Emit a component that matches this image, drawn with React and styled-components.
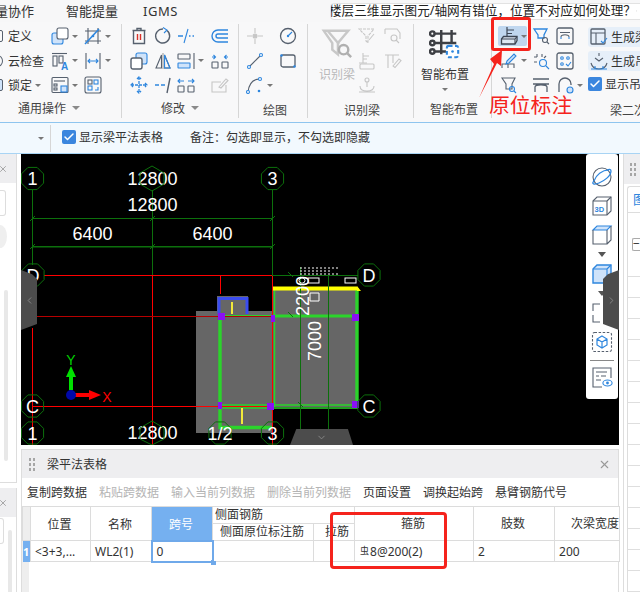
import React from "react";
import styled, { createGlobalStyle } from "styled-components";
import { Check, ChevronLeft, ChevronRight, ChevronDown, X, Search } from "lucide-react";

const D = "#56606e";
const B = "#2e86de";
const L = "#cfe3fa";
const G = "#c6c6c6";
const CAD_GREEN = "#0c700c";
const BRIGHT = "#2bd42b";
const FONT = `"Noto Sans", "Noto Sans CJK SC", sans-serif`;

const icons = {
  copy: <><rect x="1" y="6" width="11" height="11" rx="2" fill={L} stroke={B} /><rect x="6" y="1" width="11" height="11" rx="2" fill="#fff" /></>,
  trim: <><path d="M4 1v16M14 1v16M1 4h16M1 14h16" /><path d="M1 17L15 2" stroke={B} strokeWidth="1.6" /><circle cx="9" cy="9" r="1.3" fill={B} stroke="none" /></>,
  dimA: <><path d="M1 1.5h15" /><rect x="2" y="4" width="4" height="10" /><rect x="8" y="4" width="4" height="7" /><text x="10" y="17.5" fontSize="10" fontWeight="700" fill={B} stroke="none">A</text></>,
  width: <><path d="M2 1v16M16 1v16" /><path d="M4 9h10M6 7L4 9l2 2M12 7l2 2-2 2" stroke={B} /></>,
  list: <><rect x="1" y="1.5" width="16" height="15" rx="1" /><path d="M3 5h11" /><rect x="3" y="8" width="3" height="2" /><rect x="3" y="12" width="3" height="2" /><rect x="10" y="10" width="6" height="6" fill={L} stroke={B} /></>,
  swap: <><rect x="1" y="1" width="16" height="16" rx="2" /><rect x="4" y="4" width="4" height="4" /><rect x="10" y="4" width="4" height="4" stroke={B} /><rect x="4" y="10" width="4" height="4" stroke={B} /><path d="M11 14h3v-3" stroke={B} /></>,
  trash: <><path d="M2.5 3.5h13M7 3.5V1.5h4v2M3.5 3.5v13h11v-13" strokeWidth="1.4" /><path d="M7.5 7v6M10.5 7v6" stroke="#d8322a" strokeWidth="1.4" /></>,
  rotate: <><path d="M13 3.5A7 7 0 1 1 9 2" strokeWidth="1.4" /><path d="M9 .5l4 2.5-3 3" stroke={B} /></>,
  cross: <><path d="M1 9h5M12 9h1.5M15.5 9H17" stroke={B} strokeWidth="1.4" /><path d="M7 16l4-14" stroke={B} /></>,
  offset: <><path d="M17 3H7a6 6 0 0 0 0 12h10" stroke={B} strokeWidth="1.4" /><path d="M17 7H7a2 2 0 0 0 0 4h10" stroke={B} strokeWidth="1.4" /></>,
  copy2: <><rect x="6" y="1" width="11" height="11" rx="2" fill={L} stroke={B} /><rect x="1" y="6" width="11" height="11" rx="2" fill="#fff" strokeWidth="1.4" /></>,
  mirror: <><path d="M7.5 3L2 16h5.5zM10.5 3L16 16h-5.5z" /><path d="M9 1v16" stroke={G} strokeWidth="2" /><path d="M10.5 3L16 16h-5.5z" stroke={B} /></>,
  align: <><rect x="1" y="2" width="12" height="5" rx=".5" /><rect x="1" y="11" width="12" height="5" rx=".5" fill={L} stroke={B} /><path d="M17 1v16" /></>,
  split: <><rect x="1" y="10" width="6" height="6" rx=".5" /><rect x="11" y="10" width="6" height="6" rx=".5" /><path d="M1 5h3M2.5 3L4.5 5l-2 2M14 5h3M15.5 3l-2 2 2 2" stroke={B} /></>,
  move: <path d="M9 1v16M1 9h16M7 3l2-2 2 2M7 15l2 2 2-2M3 7L1 9l2 2M15 7l2 2-2 2" stroke={B} strokeWidth="1.3" strokeDasharray="3 1" />,
  extend: <><path d="M1 9h4M7 9h4" stroke={B} strokeWidth="1.4" /><path d="M13 17l3-15" strokeWidth="1.4" /></>,
  divide: <><rect x="1" y="10" width="6" height="6" rx=".5" /><rect x="11" y="10" width="6" height="6" rx=".5" /><path d="M1 5h6M3 3L1 5l2 2M11 5h6M15 3l2 2-2 2" stroke={B} /></>,
  penBox: <g stroke={G}><path d="M15 9v7H1V6h9" /><path d="M8 11l7-8 2 1.5-7 7.5z" /></g>,
  point: <g stroke={G}><path d="M9 1v5M9 12v5M1 9h5M12 9h5" /><circle cx="9" cy="9" r="2" fill={G} /></g>,
  gauge: <><circle cx="9" cy="9" r="7.5" strokeWidth="1.3" /><path d="M9 9l4-4" stroke={B} /><circle cx="9" cy="9" r="1.2" fill={B} stroke="none" /></>,
  line: <><path d="M3 15L15 3" /><circle cx="3" cy="15" r="1.5" fill="#fff" stroke={B} /><circle cx="15" cy="3" r="1.5" fill="#fff" stroke={B} /></>,
  rect: <><rect x="2" y="3" width="14" height="12" rx="2" strokeWidth="1.3" /><circle cx="2.5" cy="3.5" r="1.3" fill={B} stroke="none" /><circle cx="15.5" cy="14.5" r="1.3" fill={B} stroke="none" /></>,
  arc: <><path d="M2 16C3 7 8 3 14 3" /><circle cx="2" cy="16" r="1.5" fill="#fff" stroke={B} /><circle cx="14" cy="3" r="1.5" fill="#fff" stroke={B} /><circle cx="13" cy="15" r="1.3" fill={B} stroke="none" /></>,
  pickA: <g stroke={G}><path d="M1 2h15l-6 7v7l-2-2V9z" strokeDasharray="3 1" /><path d="M11 13l5-6" /></g>,
  pickB: <g stroke={G}><path d="M1 2h12l3 4v6M1 2v5" /><circle cx="10" cy="11" r="3" /><path d="M12 13l3 3" /></g>,
  pickC: <g stroke={G}><path d="M1 11h8M5 1v10M5 4h6M5 7h4" /><rect x="2" y="12" width="14" height="5" rx="1" /></g>,
  pickD: <g stroke={G}><path d="M1 3h14M4 3v13M9 3v8" /><path d="M9 14l6-7 2 1.5-6 7z" /></g>,
  pickE: <g stroke={G}><circle cx="9" cy="4" r="2" /><path d="M9 6v5M2 10c0 4 3 5 7 5s7-1 7-5M1 16h16" /></g>,
  place: <><path d="M7 0v10M7 3h7M7 6.5h5" stroke="#3c4654" strokeWidth="1.2" /><path d="M1.5 17V12l2-2.5H17v4l-2 3.5z" fill="#dfe9f5" stroke="#3c4654" strokeWidth="1.3" /><path d="M1.5 12H15v5M15 12l2-2.5" stroke="#3c4654" /></>,
  funnel: <><path d="M2 2h13l-3 6v3H6V8z" stroke={B} strokeWidth="1.3" /><circle cx="13" cy="13" r="2.5" /><path d="M15 15l2 2" /></>,
  arch: <><rect x="1" y="1" width="16" height="16" rx="2" strokeWidth="1.3" /><path d="M4 5.5h10M5 10c0-3 8-3 8 0" stroke={D} /><path d="M5 10v2M13 10v2" stroke={B} /></>,
  pen: <><path d="M2 16v-4h12v4M8 12v4" /><path d="M7 9l7-7 2 2-7 7-3 1z" stroke={B} fill={L} /></>,
  scan: <><path d="M5 2v3M2 5h3M10 2v3M2 10h3M14 4l-2 2" /><circle cx="11" cy="11" r="3.5" stroke={B} /><path d="M14 14l3 3" stroke={B} /></>,
  dots: <><rect x="1" y="1" width="16" height="16" rx="2" strokeWidth="1.3" /><circle cx="6" cy="6" r="1.3" stroke={B} /><circle cx="12" cy="6" r="1.3" stroke={B} /><circle cx="6" cy="12" r="1.3" stroke={B} /><path d="M10 12l2 2 3-4" stroke={B} /></>,
  tray: <><path d="M2 2h13l-3 6v5H6V8z" /><circle cx="12" cy="13" r="2.5" stroke={B} /><path d="M14 15l2 2" stroke={B} /></>,
  beam: <path d="M1 8h16M3 16v-5c0-3 12-3 12 0v5M1 3h16" strokeWidth="1.3" />,
  hook: <><path d="M3 16V8a6 6 0 0 1 12 0v1" strokeWidth="1.3" /><circle cx="14" cy="14" r="3" stroke={B} fill={L} /></>,
  gen1: <><rect x="1" y="1" width="14" height="15" rx="1" strokeWidth="1.3" /><path d="M1 5h14M6 5v11" /><path d="M11 13l2 2 4-5" stroke={B} /></>,
  gen2: <><path d="M9 1v3M5 6l4 3 4-3M1 11c1 4 4 6 8 6s7-2 8-6" /><path d="M1 17h16M5 17v-3M13 17v-3" stroke={B} /></>,
};

const bigIcons = {
  recognise: <g stroke="#c8c8c8" strokeWidth="2.6" fill="none"><path d="M3 3h26l-11 13v12l-6-5V16z" /><path d="M7 3l12 14" /><circle cx="24" cy="23" r="5" stroke="#b0b0b0" /><path d="M28 27l4 4" stroke="#b0b0b0" /></g>,
  smart: <g fill="none"><g stroke="#3d3f44" strokeWidth="2.6"><path d="M13 2v26M24 2v13M4 6h25M4 16h25M4 25h14" /><circle cx="3.5" cy="6" r="2.4" fill="#fff" /><circle cx="3.5" cy="16" r="2.4" fill="#fff" /><circle cx="3.5" cy="25" r="2.4" fill="#fff" /></g><rect x="19" y="19" width="12" height="12" rx="2" stroke={B} strokeWidth="2.2" strokeDasharray="4 2.6" fill="#fff" /><circle cx="25" cy="25" r="1.4" fill={B} /></g>,
};

const viewIcons = {
  sphere: <><circle cx="11" cy="11" r="9" stroke={D} /><path d="M3 15c-3 3 0 4 5 2s12-7 12-12c0-2-2-2-4-1" stroke={B} strokeWidth="1.3" /><path d="M3 15C5 9 11 4 18 4" stroke={B} strokeWidth="1.1" /></>,
  cube3d: <><path d="M2 6l4-4h14v14l-4 4H2z" /><path d="M2 6h14v14M16 6l4-4" /><text x="3.5" y="17" fontSize="7.5" fontWeight="700" fill={B} stroke="none">3D</text></>,
  cube: <><path d="M2 6l4-4h14l-4 4H2z" fill={L} stroke={B} /><path d="M2 6v14h14V6M16 20l4-4V2" /></>,
  cubeBlue: <><path d="M2 6l4-4h14v14l-4 4H2z" fill={L} stroke={B} strokeWidth="1.4" /><path d="M2 6h14v14M16 6l4-4" stroke={B} /></>,
  corner: <path d="M9 2H2v7M2 13v7h7" />,
  hexDash: <><rect x="1.5" y="1.5" width="19" height="19" rx="2" strokeDasharray="2.5 1.6" /><path d="M11 5l5 3v6l-5 3-5-3V8zM6 8l5 3 5-3M11 11v6" stroke={B} strokeWidth="1.2" /></>,
  docEye: <><path d="M20 12V2H2v19h9" /><path d="M5 6h11M5 10h3M10 10h5M5 14h5" /><ellipse cx="16.5" cy="17" rx="4.6" ry="3" stroke={B} /><circle cx="16.5" cy="17" r="1.4" fill={B} stroke="none" /></>,
};

const GlobalStyle = createGlobalStyle`
  html, body { margin: 0; padding: 0; background: #fff; }
  * { box-sizing: border-box; }
`;

function Icon({ name }) {
  return <IconSvg viewBox="0 0 18 18">{icons[name]}</IconSvg>;
}

function Cell({ name, caret, active }) {
  return (
    <IconCell $active={active}>
      <Icon name={name} />
      {caret && <Caret />}
    </IconCell>
  );
}

function GridIcons({ cols, items }) {
  return (
    <IconGrid $cols={cols}>
      {items.map((item, i) =>
        item ? <Cell key={i} {...item} /> : <span key={i} />
      )}
    </IconGrid>
  );
}

function Ticked({ children }) {
  return (
    <CheckRow>
      <CheckBox><Check size={12} strokeWidth={3} color="#fff" /></CheckBox>
      {children}
    </CheckRow>
  );
}

function Ribbon() {
  return (
    <RibbonBar>
      <RibbonGroup $width={122}>
        <GroupBody>
          <TextColumn>
            <TextItem><StubIcon />定义</TextItem>
            <TextItem><StubIcon $round />云检查</TextItem>
            <TextItem><StubIcon $blue />锁定<Caret /></TextItem>
          </TextColumn>
          <GridIcons
            cols="33px 33px"
            items={[
              { name: "copy", caret: true }, { name: "trim", caret: true },
              { name: "dimA", caret: true }, { name: "width", caret: true },
              { name: "list", caret: true }, { name: "swap" },
            ]}
          />
        </GroupBody>
        <GroupLabel $left={18}>通用操作<LabelCaret /></GroupLabel>
      </RibbonGroup>

      <RibbonGroup $width={117}>
        <GroupBody $pad={8}>
          <GridIcons
            cols="23.5px 23.5px 34px 23px"
            items={[
              { name: "trash" }, { name: "rotate" }, { name: "cross" }, { name: "offset" },
              { name: "copy2" }, { name: "mirror" }, { name: "align", caret: true }, { name: "split" },
              { name: "move" }, { name: "extend" }, { name: "divide" }, { name: "penBox" },
            ]}
          />
        </GroupBody>
        <GroupLabel $left={39}>修改<LabelCaret /></GroupLabel>
      </RibbonGroup>

      <RibbonGroup $width={69}>
        <GroupBody $pad={7}>
          <GridIcons
            cols="33px 27px"
            items={[
              { name: "point" }, { name: "gauge" },
              { name: "line" }, { name: "rect" },
              { name: "arc", caret: true }, null,
            ]}
          />
        </GroupBody>
        <GroupLabel $left={24} $low>绘图</GroupLabel>
      </RibbonGroup>

      <RibbonGroup $width={106}>
        <GroupBody $pad={11}>
          <BigButton $width={36} $muted>
            <BigIconSvg viewBox="0 0 34 34">{bigIcons.recognise}</BigIconSvg>
            <span>识别梁</span>
          </BigButton>
          <SmallGridSpacer />
          <GridIcons
            cols="26px 24px"
            items={[
              { name: "pickA" }, { name: "pickB" },
              { name: "pickC" }, { name: "pickD" },
              { name: "pickE" }, null,
            ]}
          />
        </GroupBody>
        <GroupLabel $left={36} $low>识别梁</GroupLabel>
      </RibbonGroup>

      <RibbonGroup $width={78}>
        <GroupBody $pad={7}>
          <BigButton $width={48}>
            <BigIconSvg viewBox="0 0 34 34">{bigIcons.smart}</BigIconSvg>
            <span>智能布置</span>
            <Caret />
          </BigButton>
        </GroupBody>
        <GroupLabel $left={16} $low>智能布置</GroupLabel>
      </RibbonGroup>

      <LastGroup>
        <GroupBody $pad={8}>
          <GridIcons
            cols="32px 24px 32px"
            items={[
              { name: "place", caret: true, active: true }, { name: "funnel" }, { name: "arch" },
              { name: "pen", caret: true }, { name: "scan" }, { name: "dots" },
              { name: "tray" }, { name: "beam" }, { name: "hook", caret: true },
            ]}
          />
          <SideColumn>
            <SoftButton><Icon name="gen1" />生成梁</SoftButton>
            <SoftButton><Icon name="gen2" />生成吊</SoftButton>
            <Ticked>显示吊</Ticked>
          </SideColumn>
        </GroupBody>
        <GroupLabel $left={118} $low>梁二次</GroupLabel>
      </LastGroup>
    </RibbonBar>
  );
}

function Bubble({ x, y, label }) {
  const points = Array.from({ length: 8 }, (_, i) => {
    const a = (Math.PI / 4) * i + Math.PI / 8;
    return `${x + 12 * Math.cos(a)},${y + 12 * Math.sin(a)}`;
  }).join(" ");
  return (
    <g>
      <polygon points={points} fill="none" stroke={CAD_GREEN} />
      <CadText x={x} y={y + 6.5}>{label}</CadText>
    </g>
  );
}

function CadDrawing() {
  return (
    <CadSvg viewBox="21 154 598 291">
      {/* dimension lines */}
      <g stroke={CAD_GREEN} fill="none">
        <path d="M32.5 190V265M152.5 190V275M272.5 190V275" />
        <path d="M32.5 218.5H272.5M32.5 246.5H272.5" />
        <path d="M32.5 247H272.5" />
        <path d="M30 221l5-5M150 221l5-5M270 221l5-5M30 249l5-5M150 249l5-5M270 249l5-5" />
      </g>

      {/* gray slabs */}
      <g fill="#666">
        <rect x="196" y="311" width="76" height="122" />
        <rect x="217" y="296" width="31" height="20" />
        <rect x="272" y="288" width="86" height="119" />
      </g>

      {/* beams */}
      <g stroke={BRIGHT} fill="none">
        <path d="M220 316V427.5H272" strokeWidth="3.4" />
        <path d="M225 316H272" strokeWidth="1.8" />
        <path d="M272 316H358" strokeWidth="3" />
        <path d="M357 288V407" strokeWidth="3.4" />
        <path d="M220 405H358M220 408H358" strokeWidth="1.6" />
        <path d="M274.5 288V407" strokeWidth="1.6" />
      </g>

      {/* axes */}
      <g stroke="#ff0000" fill="none">
        <path d="M44 275.5H272.5" />
        <path d="M152.5 275V445M272.5 275V445M32.5 328V445M220.5 275V294" />
        <path d="M32 406.5H272" />
        <path d="M37 316.5H272" stroke="#b80000" />
      </g>

      <path d="M273 288.5H357" stroke="#ffff00" strokeWidth="4" />
      <path d="M357 286l4 5h-4z" fill="#ffff00" />
      <path d="M219 314V298.5H247V314" stroke="#3a4cf0" strokeWidth="3" fill="none" />
      <path d="M232 302V314M242 408V424" stroke="#f2e93a" strokeWidth="2" />
      <g fill="#8a10f5">
        <rect x="218" y="313" width="7" height="7" />
        <rect x="271" y="315" width="4" height="7" />
        <rect x="352" y="314" width="7" height="7" />
        <rect x="218" y="402" width="4" height="7" />
        <rect x="267" y="403" width="7" height="7" />
        <rect x="352" y="401" width="7" height="7" />
      </g>

      {/* inner dimension */}
      <g stroke={CAD_GREEN} fill="none">
        <path d="M272 275.5H358M300.5 267V429M328.5 275V430" />
        <path d="M288 272l5 5M288 312l5 5M298 402l5 5" />
      </g>
      <g stroke="#fff" fill="none">
        <path d="M300 268h38M300 271h32M300 274h40" strokeDasharray="2 2" />
        <rect x="308" y="278" width="11" height="5" />
        <rect x="345" y="278" width="11" height="5" />
        <rect x="299" y="278" width="6" height="5" rx="2.5" />
        <path d="M310 293h9v8h-9zM340 431c5-1 7 2 6 5" />
      </g>

      <CadText x="152.5" y="185">12800</CadText>
      <CadText x="152.5" y="211">12800</CadText>
      <CadText x="92.5" y="239.5">6400</CadText>
      <CadText x="212.5" y="239.5">6400</CadText>
      <CadText x="152.5" y="439">12800</CadText>
      <CadText transform="translate(309 296) rotate(-90)">2200</CadText>
      <CadText transform="translate(321 341) rotate(-90)">7000</CadText>

      <polygon points="152,166 164,173 164,184 152,191 140,184 140,173" fill="none" stroke={CAD_GREEN} />
      <polygon points="152,421 164,428 164,439 152,445 140,439 140,428" fill="none" stroke={CAD_GREEN} />
      <Bubble x={32.5} y={178.5} label="1" />
      <Bubble x={272.5} y={178.5} label="3" />
      <Bubble x={33} y={275} label="D" />
      <Bubble x={369} y={275} label="D" />
      <Bubble x={32.5} y={406} label="C" />
      <Bubble x={369} y={406} label="C" />
      <Bubble x={32.5} y={433} label="1" />
      <Bubble x={220} y={433} label="1/2" />
      <Bubble x={272.5} y={433} label="3" />

      {/* coordinate axes */}
      <path d="M71 390V376" stroke="#00e000" strokeWidth="4" />
      <path d="M71 366l5 11H66z" fill="#00e000" />
      <path d="M74 395H90" stroke="#ff0000" strokeWidth="4" />
      <path d="M101 395l-12-5v10z" fill="#ff0000" />
      <circle cx="71" cy="395" r="5" fill="#0008a8" />
      <AxisText x="71" y="365" fill="#00d000">Y</AxisText>
      <AxisText x="107" y="402" fill="#ff0000">X</AxisText>
    </CadSvg>
  );
}

const VIEW_TOOLS = ["sphere", "cube3d", "cube", "caret", "cubeBlue", "caret", "corner", "hexDash", "rule", "docEye"];

function ViewToolbar() {
  return (
    <ViewTools>
      {VIEW_TOOLS.map((tool, i) => {
        if (tool === "caret") return <ViewCaret key={i} />;
        if (tool === "rule") return <ViewRule key={i} />;
        return <ViewIconSvg key={i} viewBox="0 0 22 22">{viewIcons[tool]}</ViewIconSvg>;
      })}
    </ViewTools>
  );
}

function BeamTable() {
  return (
    <TableWrap>
      <Grid>
        <colgroup>
          {[8, 60, 61, 61, 101, 41, 119, 81, 65].map((w, i) => <col key={i} style={{ width: w }} />)}
        </colgroup>
        <thead>
          <tr>
            <Head rowSpan={2} $bare />
            <Head rowSpan={2} $tall>位置</Head>
            <Head rowSpan={2} $tall>名称</Head>
            <Head rowSpan={2} $tall $selected>跨号</Head>
            <Head colSpan={2} $left>侧面钢筋</Head>
            <Head rowSpan={2}>箍筋</Head>
            <Head rowSpan={2}>肢数</Head>
            <Head rowSpan={2} $right>次梁宽度</Head>
          </tr>
          <tr>
            <Head>侧面原位标注筋</Head>
            <Head $right $inset>拉筋</Head>
          </tr>
        </thead>
        <tbody>
          <tr>
            <RowNo>1</RowNo>
            <Value>&lt;3+3,...</Value>
            <Value>WL2(1)</Value>
            <Value $editing>0<FillHandle /></Value>
            <Value />
            <Value />
            <Value><Rebar>虫</Rebar>8@200(2)</Value>
            <Value>2</Value>
            <Value>200</Value>
          </tr>
        </tbody>
      </Grid>
    </TableWrap>
  );
}

export default function App() {
  return (
    <>
      <GlobalStyle />
      <Page>
        <MenuBar>
          <MenuItems>
            <MenuItem $cut>量协作</MenuItem>
            <MenuItem>智能提量</MenuItem>
            <MenuItem $latin>IGMS</MenuItem>
          </MenuItems>
          <SearchBox>
            <SearchText>楼层三维显示图元/轴网有错位，位置不对应如何处理？</SearchText>
            <Search size={12} color="#888" />
          </SearchBox>
        </MenuBar>

        <Ribbon />

        <OptionBar>
          <OptionStub><Caret /></OptionStub>
          <Ticked>显示梁平法表格</Ticked>
          <Remark>备注：勾选即显示，不勾选即隐藏</Remark>
        </OptionBar>

        <Workspace>
          <LeftRail>
            <RailPanel $grow>
              <RailHead><X size={10} color="#999" /></RailHead>
              <RailInput />
              <RailDisc />
              <RailScroll />
            </RailPanel>
            <RailPanel $short>
              <RailHead><X size={10} color="#999" /></RailHead>
              <RailInput $short />
              <RailScroll $low />
            </RailPanel>
          </LeftRail>

          <Center>
            <Canvas>
              <CadDrawing />
              <ViewToolbar />
              <SideHandle $side="left"><ChevronLeft size={11} color="#8a8a8a" /></SideHandle>
              <SideHandle $side="right"><ChevronRight size={11} color="#8a8a8a" /></SideHandle>
              <BottomHandle><ChevronDown size={11} color="#8a8a8a" /></BottomHandle>
            </Canvas>

            <TablePanel>
              <PanelHead>
                <DragDots />
                <PanelTitle>梁平法表格</PanelTitle>
                <X size={13} color="#999" />
              </PanelHead>
              <TableTools>
                <ToolLink>复制跨数据</ToolLink>
                <ToolLink $off>粘贴跨数据</ToolLink>
                <ToolLink $off>输入当前列数据</ToolLink>
                <ToolLink $off>删除当前列数据</ToolLink>
                <ToolLink>页面设置</ToolLink>
                <ToolLink>调换起始跨</ToolLink>
                <ToolLink>悬臂钢筋代号</ToolLink>
              </TableTools>
              <BeamTable />
            </TablePanel>
          </Center>

          <RightRail>
            <RightHead><DragDots /></RightHead>
            <RightTab>图</RightTab>
            <RightSheet>
              <Collapse>−</Collapse>
            </RightSheet>
          </RightRail>
        </Workspace>

        <AnnotationBox />
        <AnnotationArrow viewBox="0 0 30 52">
          <path d="M0 50L15 16 11 11 23 2 22 18 18 15z" fill="#f5231c" />
        </AnnotationArrow>
        <AnnotationText>原位标注</AnnotationText>
        <TableHighlight />
      </Page>
    </>
  );
}

const Page = styled.div`
  position: relative;
  width: 640px;
  height: 592px;
  overflow: hidden;
  display: flex;
  flex-direction: column;
  background: #fff;
  color: #333;
  font-family: ${FONT};
  font-size: 12px;
`;

const MenuBar = styled.div`
  flex: none;
  height: 22px;
  display: flex;
  align-items: center;
  justify-content: space-between;
  background: #f7f7f8;
`;
const MenuItems = styled.div`
  display: flex;
  gap: 25px;
`;
const MenuItem = styled.span`
  font-size: 13px;
  line-height: 20px;
  white-space: nowrap;
  letter-spacing: ${(p) => (p.$latin ? "0.5px" : "0")};
  margin-left: ${(p) => (p.$cut ? "-5px" : "0")};
  margin-right: ${(p) => (p.$cut ? "7px" : "0")};
`;
const SearchBox = styled.div`
  width: 316px;
  margin-right: -6px;
  height: 17px;
  padding: 0 8px 0 1px;
  display: flex;
  align-items: center;
  justify-content: space-between;
  background: #fff;
  border: 1px solid #e2e2e2;
  border-radius: 4px 0 0 4px;
  overflow: hidden;
`;
const SearchText = styled.span`
  font-size: 12.6px;
  line-height: 16px;
  color: #222;
  white-space: nowrap;
  margin-left: -3px;
`;

const RibbonBar = styled.div`
  flex: none;
  height: 101px;
  padding: 2px 0 4px;
  display: flex;
  background: #f8f8f9;
  border-bottom: 1px solid #8ec5ef;
`;
const RibbonGroup = styled.div`
  flex: none;
  width: ${(p) => p.$width}px;
  display: flex;
  flex-direction: column;
  border-right: 1px solid #d6d6d6;
`;
const LastGroup = styled.div`
  flex: 1;
  min-width: 0;
  display: flex;
  flex-direction: column;
`;
const GroupBody = styled.div`
  flex: 1;
  display: flex;
  align-items: flex-start;
  padding-left: ${(p) => p.$pad || 0}px;
`;
const GroupLabel = styled.div`
  height: 22px;
  display: flex;
  align-items: center;
  gap: 5px;
  padding-left: ${(p) => p.$left}px;
  padding-top: ${(p) => (p.$low ? "3px" : "0")};
  font-size: 12px;
  white-space: nowrap;
  color: #444;
`;
const LabelCaret = styled.span`
  margin-left: 1px;
  border-left: 4px solid transparent;
  border-right: 4px solid transparent;
  border-top: 4px solid #8a8a8a;
`;
const Caret = styled.span`
  flex: none;
  display: inline-block;
  margin-left: 3px;
  border-left: 3px solid transparent;
  border-right: 3px solid transparent;
  border-top: 3.5px solid #777;
`;
const TextColumn = styled.div`
  width: 51px;
  flex: none;
  display: flex;
  flex-direction: column;
`;
const TextItem = styled.div`
  height: 24.5px;
  display: flex;
  align-items: center;
  margin-left: -8px;
  white-space: nowrap;
`;
const StubIcon = styled.span`
  flex: none;
  width: 11px;
  height: 12px;
  margin-right: 5px;
  border: 1px solid #56606e;
  border-radius: ${(p) => (p.$round ? "50%" : "2px")};
  background: ${(p) => (p.$blue ? "#cfe3fa" : "transparent")};
`;
const IconGrid = styled.div`
  display: grid;
  grid-template-columns: ${(p) => p.$cols};
  grid-auto-rows: 24.5px;
`;
const IconCell = styled.div`
  display: flex;
  align-items: center;
  position: relative;
  &::before {
    content: "";
    display: ${(p) => (p.$active ? "block" : "none")};
    position: absolute;
    left: -2px;
    top: 2px;
    width: 29px;
    height: 20px;
    background: #c0d7ef;
    border-radius: 2px;
  }
  & > * {
    position: relative;
  }
`;
const IconSvg = styled.svg`
  flex: none;
  width: 18px;
  height: 18px;
  fill: none;
  stroke: ${D};
  stroke-width: 1.1;
  font-family: "Liberation Sans", sans-serif;
`;
const BigButton = styled.div`
  flex: none;
  width: ${(p) => p.$width}px;
  display: flex;
  flex-direction: column;
  align-items: center;
  white-space: nowrap;
  padding-top: 4px;
  color: ${(p) => (p.$muted ? "#b9b9b9" : "#333")};
  span:not(:empty) {
    margin-top: 6px;
    line-height: 17px;
  }
  span:empty {
    margin: 5px 0 0;
  }
`;
const BigIconSvg = styled.svg`
  width: 32px;
  height: 32px;
`;
const SmallGridSpacer = styled.div`
  width: 3px;
`;
const SideColumn = styled.div`
  display: flex;
  flex-direction: column;
  gap: 4px;
  padding-top: 3px;
`;
const SoftButton = styled.div`
  width: 70px;
  height: 20px;
  padding-left: 2px;
  display: flex;
  align-items: center;
  gap: 3px;
  background: #e6eff9;
  border-radius: 3px;
  white-space: nowrap;
`;
const CheckRow = styled.label`
  display: flex;
  align-items: center;
  gap: 3px;
  white-space: nowrap;
`;
const CheckBox = styled.span`
  flex: none;
  width: 14px;
  height: 14px;
  display: flex;
  align-items: center;
  justify-content: center;
  background: #3b86de;
  border-radius: 2px;
`;

const OptionBar = styled.div`
  flex: none;
  height: 31px;
  padding-bottom: 3px;
  display: flex;
  align-items: center;
  background: #f2f9fe;
  border-bottom: 1px solid #a8d4f4;
  font-size: 12px;
`;
const OptionStub = styled.div`
  width: 51px;
  height: 100%;
  margin-right: 11px;
  margin-bottom: -3px;
  display: flex;
  align-items: center;
  justify-content: flex-end;
  padding-right: 6px;
  border-right: 1px solid #d6d6d6;
`;
const Remark = styled.span`
  margin-left: 27px;
`;

const Workspace = styled.div`
  flex: 1;
  min-height: 0;
  display: flex;
`;
const LeftRail = styled.div`
  flex: none;
  width: 17px;
  margin-right: 4px;
  display: flex;
  flex-direction: column;
  gap: 5px;
`;
const RailPanel = styled.div`
  position: relative;
  height: ${(p) => (p.$grow ? "329px" : "auto")};
  flex: ${(p) => (p.$grow ? "none" : 1)};
  border-right: 1px solid #ddd;
  border-bottom: ${(p) => (p.$grow ? "1px solid #ddd" : "0")};
  overflow: hidden;
`;
const RailHead = styled.div`
  height: 29px;
  display: flex;
  align-items: center;
  margin-left: -2px;
  background: #eeeef0;
`;
const RailInput = styled.div`
  width: ${(p) => (p.$short ? "4px" : "6px")};
  height: 26px;
  margin-top: ${(p) => (p.$short ? "1px" : "7px")};
  border: 1px solid #ddd;
  border-left: 0;
  border-radius: 0 3px 3px 0;
`;
const RailDisc = styled.div`
  width: 14px;
  height: 23px;
  margin: 9px 0 0 -7px;
  border-radius: 50%;
  background: #efefef;
`;
const RailScroll = styled.div`
  position: absolute;
  left: ${(p) => (p.$low ? "8px" : "4px")};
  top: ${(p) => (p.$low ? "42px" : "136px")};
  width: 4px;
  height: ${(p) => (p.$low ? "80px" : "171px")};
  background: #e8e8e8;
  border-radius: 2px;
`;

const Center = styled.div`
  flex: none;
  width: 598px;
  display: flex;
  flex-direction: column;
  gap: 4px;
`;
const Canvas = styled.div`
  position: relative;
  flex: none;
  height: 291px;
  background: #000;
  overflow: hidden;
`;
const CadSvg = styled.svg`
  display: block;
  width: 598px;
  height: 291px;
`;
const CadText = styled.text`
  font-family: "Liberation Sans", sans-serif;
  font-size: 18px;
  fill: #fff;
  text-anchor: middle;
`;
const AxisText = styled.text`
  font-family: "Liberation Sans", sans-serif;
  font-size: 14px;
  text-anchor: middle;
`;
const ViewTools = styled.div`
  position: absolute;
  top: 0;
  right: 1px;
  width: 32px;
  height: 245px;
  padding-top: 12px;
  display: flex;
  flex-direction: column;
  align-items: center;
  background: #fff;
  border-radius: 3px;
`;
const ViewIconSvg = styled.svg`
  flex: none;
  width: 22px;
  height: 22px;
  margin-bottom: 7px;
  fill: none;
  stroke: ${D};
  stroke-width: 1.1;
  font-family: "Liberation Sans", sans-serif;
`;
const ViewCaret = styled.span`
  flex: none;
  margin: -1px 0 6px;
  border-left: 4px solid transparent;
  border-right: 4px solid transparent;
  border-top: 5px solid #555;
`;
const ViewRule = styled.span`
  flex: none;
  width: 24px;
  height: 1px;
  margin: 0 0 5px;
  background: #888;
`;
const SideHandle = styled.div`
  position: absolute;
  top: 116px;
  ${(p) => (p.$side === "left" ? "left: 0;" : "right: 0;")}
  width: 16px;
  height: 60px;
  display: flex;
  align-items: center;
  justify-content: center;
  background: #4c4c4c;
  clip-path: ${(p) =>
    p.$side === "left"
      ? "polygon(0 0, 70% 7%, 100% 15%, 100% 90%, 0 100%)"
      : "polygon(100% 0, 30% 7%, 0 15%, 0 90%, 100% 100%)"};
`;
const BottomHandle = styled.div`
  position: absolute;
  left: 269px;
  bottom: 0;
  width: 63px;
  height: 16px;
  display: flex;
  align-items: center;
  justify-content: center;
  background: #4c4c4c;
  clip-path: polygon(10% 0, 92% 0, 100% 100%, 0 100%);
`;

const TablePanel = styled.div`
  flex: 1;
  min-height: 0;
  display: flex;
  flex-direction: column;
  border-top: 1px solid #ddd;
  border-left: 1px solid #ddd;
  border-right: 1px solid #ddd;
`;
const PanelHead = styled.div`
  flex: none;
  height: 28px;
  padding: 0 7px 0 6px;
  display: flex;
  align-items: center;
  background: #eeeef0;
`;
const DragDots = styled.span`
  flex: none;
  width: 7px;
  height: 15px;
  background: radial-gradient(circle, #a6a6a6 1.2px, transparent 1.5px) 0 0 / 4px 5px;
`;
const PanelTitle = styled.span`
  flex: 1;
  margin-left: 12px;
`;
const TableTools = styled.div`
  flex: none;
  height: 28px;
  padding-left: 5px;
  display: flex;
  align-items: center;
  gap: 12px;
`;
const ToolLink = styled.span`
  white-space: nowrap;
  color: ${(p) => (p.$off ? "#b4b4b4" : "#333")};
`;
const TableWrap = styled.div`
  flex: 1;
  min-height: 0;
  background: linear-gradient(to right, #eeeeee 7px, #fff 7px);
`;
const Grid = styled.table`
  table-layout: fixed;
  width: 597px;
  border-collapse: collapse;
  font-size: 12px;
`;
const Head = styled.th`
  height: 17px;
  padding: ${(p) => (p.$tall ? "3px" : "0")} ${(p) => (p.$inset ? "5px" : p.$right ? "0" : "2px")} 0 ${(p) => (p.$left ? "2px" : "0")};
  border: 1px solid #dcdcdc;
  font-weight: 400;
  line-height: 14px;
  white-space: nowrap;
  overflow: hidden;
  text-align: ${(p) => (p.$left ? "left" : p.$right ? "right" : "center")};
  color: ${(p) => (p.$selected ? "#fff" : "#333")};
  background: ${(p) => (p.$selected ? "#75b0f0" : "#fff")};
  ${(p) => p.$bare && "background: #eeeeee;"}
`;
const RowNo = styled.td`
  height: 21px;
  padding: 0;
  text-align: center;
  font-weight: 700;
  font-size: 11px;
  color: #fff;
  background: #75b0f0;
`;
const Value = styled.td`
  position: relative;
  height: 21px;
  padding: 0 4px;
  border: ${(p) => (p.$editing ? "2px solid #6fa9ea" : "1px solid #dcdcdc")};
  white-space: nowrap;
  overflow: ${(p) => (p.$editing ? "visible" : "hidden")};
  background: #fff;
`;
const FillHandle = styled.span`
  position: absolute;
  right: -4px;
  bottom: -4px;
  width: 5px;
  height: 5px;
  background: #6fa9ea;
`;
const Rebar = styled.span`
  position: relative;
  top: -2px;
  margin-left: 1px;
  margin-right: 1px;
  font-size: 9px;
`;

const RightRail = styled.div`
  flex: none;
  width: 17px;
  margin-left: 4px;
  border-left: 1px solid #ddd;
`;
const RightHead = styled.div`
  height: 30px;
  padding-left: 5px;
  display: flex;
  align-items: center;
  background: #eeeef0;
`;
const RightTab = styled.div`
  height: 26px;
  margin: 2px 0 0 3px;
  padding-left: 5px;
  border: 1px solid #ddd;
  border-right: 0;
  border-bottom: 0;
  border-radius: 3px 0 0 0;
  line-height: 24px;
  font-size: 13px;
  color: ${B};
  overflow: hidden;
`;
const RightSheet = styled.div`
  height: 380px;
  padding: 25px 0 0 4px;
  margin-left: 3px;
  border-left: 1px solid #ddd;
  border-top: 1px solid #ddd;
  background:
    repeating-linear-gradient(to bottom, transparent 0 20px, #dedede 20px 21px) 0 43px no-repeat;
`;
const Collapse = styled.div`
  width: 12px;
  height: 13px;
  border: 1px solid #aaa;
  border-right: 0;
  border-radius: 2px 0 0 2px;
  background: #fff;
  line-height: 10px;
`;

const AnnotationBox = styled.div`
  position: absolute;
  left: 491px;
  top: 17px;
  width: 40px;
  height: 34px;
  border: 3px solid #f5231c;
  border-radius: 3px;
`;
const AnnotationArrow = styled.svg`
  position: absolute;
  left: 479px;
  top: 48px;
  width: 30px;
  height: 52px;
`;
const AnnotationText = styled.div`
  position: absolute;
  left: 489px;
  top: 91px;
  font-size: 20.8px;
  line-height: 28px;
  color: #f5231c;
  white-space: nowrap;
`;
const TableHighlight = styled.div`
  position: absolute;
  left: 330px;
  top: 512px;
  width: 117px;
  height: 57px;
  border: 3px solid #f5231c;
  border-radius: 4px;
`;
